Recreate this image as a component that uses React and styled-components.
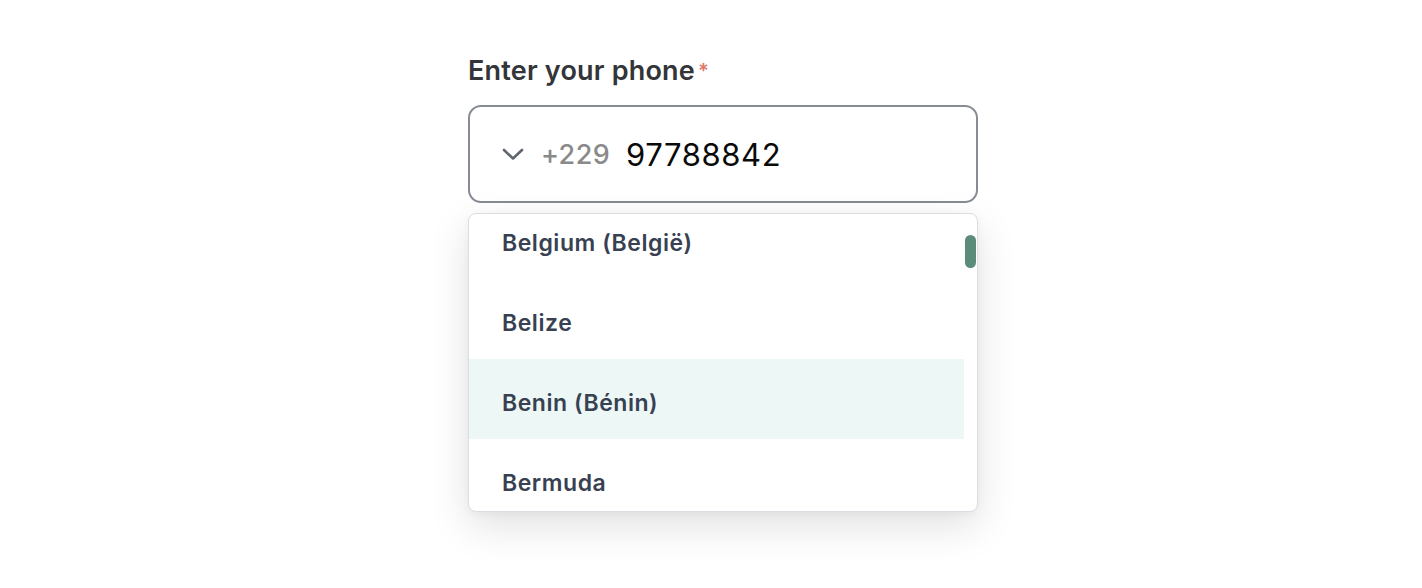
import React, { useLayoutEffect, useRef } from 'react';
import styled, { createGlobalStyle } from 'styled-components';

const GlobalStyle = createGlobalStyle`
  html, body {
    margin: 0;
    background: #ffffff;
    font-family: Inter, "Noto Sans", "Liberation Sans", sans-serif;
  }
`;

const Page = styled.div`
  padding: 55px 0 0 468px;
  height: 588px;
  box-sizing: border-box;
`;

const Field = styled.div`
  width: 510px;
  display: flex;
  flex-direction: column;
`;

const Label = styled.label`
  font-size: 27px;
  line-height: 32px;
  font-weight: 600;
  color: #333538;
  letter-spacing: 0.2px;
  margin-bottom: 18px;
`;

const Required = styled.span`
  color: #e0786c;
  font-size: 20px;
  vertical-align: top;
  margin-left: 3px;
`;

const InputBox = styled.div`
  height: 98px;
  box-sizing: border-box;
  border: 2px solid #878c94;
  border-radius: 13px;
  display: flex;
  align-items: center;
  padding-left: 32px;
  background: #fff;
`;

const Chevron = styled.svg`
  width: 22px;
  height: 14px;
  margin-right: 17px;
  flex-shrink: 0;
`;

const Code = styled.span`
  font-size: 27px;
  font-weight: 500;
  color: #8a8a8a;
  letter-spacing: 0.4px;
  margin-right: 16px;
`;

const Number = styled.span`
  font-size: 31px;
  font-weight: 400;
  color: #0a0a0a;
  letter-spacing: 0.6px;
`;

const Dropdown = styled.div`
  margin-top: 10px;
  height: 299px;
  box-sizing: border-box;
  border: 1.5px solid #dadde2;
  border-radius: 8px;
  background: #fff;
  box-shadow: 0 14px 40px rgba(0, 0, 0, 0.12), 0 2px 8px rgba(0, 0, 0, 0.04);
  display: flex;
  overflow: hidden;
`;

const List = styled.ul`
  flex: 1;
  margin: 0;
  padding: 0;
  list-style: none;
  overflow: hidden;
`;

const Option = styled.li`
  height: 80px;
  box-sizing: border-box;
  padding: 8px 0 0 33px;
  display: flex;
  align-items: center;
  font-size: 23px;
  font-weight: 600;
  color: #374151;
  letter-spacing: 0.55px;
  background: ${p => (p.$active ? '#edf7f5' : 'transparent')};
`;

const Rail = styled.div`
  width: 13px;
  display: flex;
  flex-direction: column;
  align-items: center;
`;

const Thumb = styled.div`
  margin-top: 21px;
  width: 11px;
  height: 33px;
  border-radius: 6px;
  background: #5b8b79;
`;

const countries = ['Belarus (Беларусь)', 'Belgium (België)', 'Belize', 'Benin (Bénin)', 'Bermuda', 'Bhutan'];

export default function App() {
  const listRef = useRef(null);

  useLayoutEffect(() => {
    if (listRef.current) listRef.current.scrollTop = 95;
  }, []);

  return (
    <>
      <GlobalStyle />
      <Page>
        <Field>
          <Label>
            Enter your phone<Required>*</Required>
          </Label>
          <InputBox>
            <Chevron viewBox="0 0 22 14" fill="none">
              <path d="M2 3l9 8.5L20 3" stroke="#5f6670" strokeWidth="2.6" strokeLinecap="round" strokeLinejoin="round" />
            </Chevron>
            <Code>+229</Code>
            <Number>97788842</Number>
          </InputBox>
          <Dropdown>
            <List ref={listRef}>
              {countries.map(c => (
                <Option key={c} $active={c === 'Benin (Bénin)'}>{c}</Option>
              ))}
            </List>
            <Rail>
              <Thumb />
            </Rail>
          </Dropdown>
        </Field>
      </Page>
    </>
  );
}
